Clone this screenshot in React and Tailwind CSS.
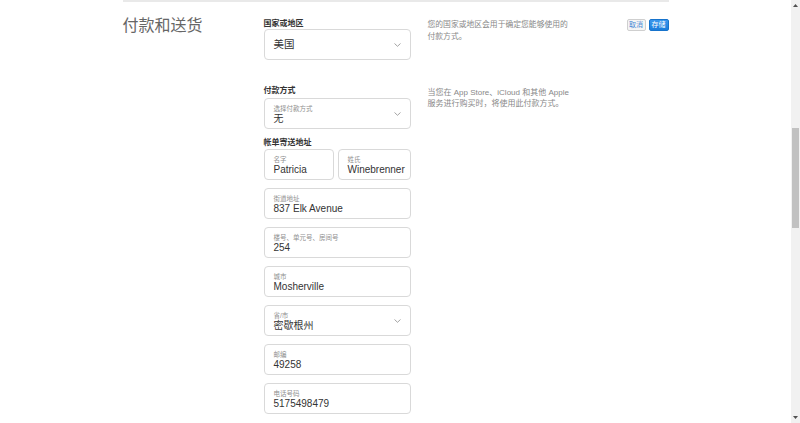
import React from 'react';

const font = "font-['Liberation_Sans','Noto_Sans_CJK_SC',sans-serif]";

// Tiny chevron used on select boxes
const Chevron = () => (
  <svg width="7" height="4" viewBox="0 0 7 4" className="shrink-0">
    <path d="M0.5 0.5 L3.5 3.3 L6.5 0.5" fill="none" stroke="#9a9a9a" strokeWidth="0.9" />
  </svg>
);

const Field = ({ label, value, select, className = '' }) => (
  <div
    className={`h-[31px] rounded-[4px] border border-[#d9d9d9] bg-white pl-[9px] pr-[9px] flex items-center overflow-hidden ${className}`}
  >
    <div className="flex-1 min-w-0 pt-[3px]">
      <div className="text-[6.5px] leading-[8px] text-[#8f8f8f] whitespace-nowrap">{label}</div>
      <div className="text-[10px] leading-[12px] text-[#333] whitespace-nowrap">{value}</div>
    </div>
    {select && <Chevron />}
  </div>
);

const billing = [
  { label: '街道地址', value: '837 Elk Avenue' },
  { label: '楼号、单元号、房间号', value: '254' },
  { label: '城市', value: 'Mosherville' },
  { label: '省/市', value: '密歇根州', select: true },
  { label: '邮编', value: '49258' },
  { label: '电话号码', value: '5175498479' },
];

const App = () => {
  return (
    <div className={`flex h-[423px] w-[800px] overflow-hidden bg-white ${font}`}>
      <div className="flex-1 min-w-0">
        <div className="mx-auto w-[546px] border-t-2 border-[#e9e9e9] pt-[14px] flex items-start">
          {/* Section title */}
          <h2 className="w-[141px] shrink-0 text-[16px] leading-[20px] text-[#666] font-normal">付款和送货</h2>

          <div className="flex flex-col pt-[2px]">
            {/* Country */}
            <div className="flex items-start">
              <div className="w-[147px] shrink-0">
                <div className="text-[8px] leading-[11px] font-bold text-[#333]">国家或地区</div>
                <div className="h-[31px] rounded-[4px] border border-[#d9d9d9] pl-[9px] pr-[9px] flex items-center justify-between">
                  <span className="text-[10.5px] text-[#333]">美国</span>
                  <Chevron />
                </div>
              </div>
              <p className="ml-[17px] w-[147px] text-[7.8px] leading-[11.5px] text-[#888] pt-[1px]">
                您的国家或地区会用于确定您能够使用的付款方式。
              </p>
            </div>

            {/* Payment method + billing */}
            <div className="flex items-start mt-[26px]">
              <div className="w-[147px] shrink-0">
                <div className="text-[8px] leading-[10px] font-bold text-[#333] mb-[2px]">付款方式</div>
                <Field label="选择付款方式" value="无" select />
                <div className="mt-[9px] mb-[1px] text-[8px] leading-[10px] font-bold text-[#333]">帐单寄送地址</div>
                <div className="flex flex-col gap-[8px]">
                  <div className="flex gap-[4px]">
                    <Field label="名字" value="Patricia" className="w-[70px] shrink-0" />
                    <Field label="姓氏" value="Winebrenner" className="flex-1 min-w-0 !pr-[1px]" />
                  </div>
                  {billing.map((f) => (
                    <Field key={f.label} label={f.label} value={f.value} select={f.select} />
                  ))}
                </div>
              </div>
              <p className="ml-[17px] w-[147px] text-[8px] leading-[10.5px] text-[#888] pt-[2px]">
                当您在 App Store、iCloud 和其他 Apple 服务进行购买时，将使用此付款方式。
              </p>
            </div>
          </div>

          {/* Actions */}
          <div className="ml-auto flex gap-[3px] pt-[3px]">
            <button className="h-[12px] w-[19px] rounded-[2px] border border-[#cfcfcf] bg-[#f4f4f4] text-[7px] leading-[10px] text-[#4a8ad4]">
              取消
            </button>
            <button className="h-[12px] w-[20px] rounded-[2px] border border-[#1673cc] bg-gradient-to-b from-[#3a97ec] to-[#1a7ddb] text-[7px] leading-[10px] text-white">
              存储
            </button>
          </div>
        </div>
      </div>

      {/* Scrollbar */}
      <div className="w-[9px] shrink-0 bg-[#f1f1f1] flex flex-col items-center">
        <svg width="5" height="3" viewBox="0 0 5 3" className="mt-[4px]">
          <path d="M0 3 L2.5 0 L5 3 Z" fill="#505050" />
        </svg>
        <div className="mt-[121px] h-[100px] w-[7px] bg-[#c1c1c1]" />
        <div className="flex-1" />
        <svg width="5" height="3" viewBox="0 0 5 3" className="mb-[4px]">
          <path d="M0 0 L2.5 3 L5 0 Z" fill="#505050" />
        </svg>
      </div>
    </div>
  );
};

export default App;
